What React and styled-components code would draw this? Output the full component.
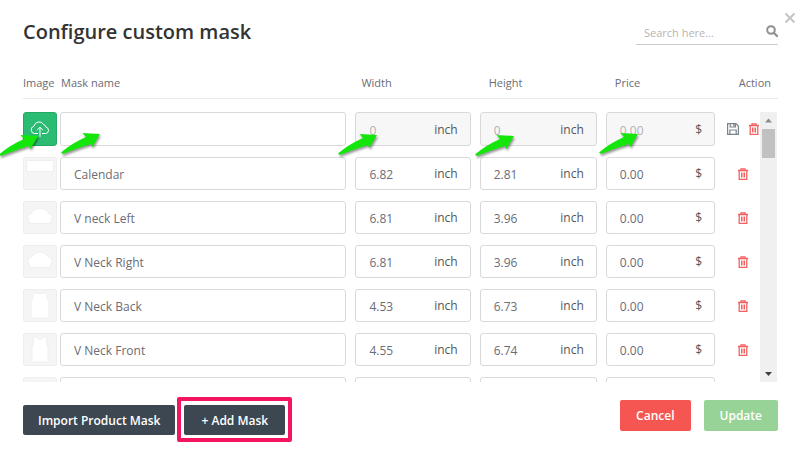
import React from "react";
import styled, { createGlobalStyle } from "styled-components";

const GlobalStyle = createGlobalStyle`
  *, *::before, *::after { box-sizing: border-box; }
  body {
    margin: 0;
    background: #fff;
    color: #6b6c76;
    font-family: "Open Sans", "Noto Sans", sans-serif;
    font-size: 12px;
    overflow: hidden;
  }
  button, input { font: inherit; }
`;

const Dialog = styled.main`
  position: relative;
  padding: 17px 22px 17px 23px;
`;

const CloseButton = styled.button`
  position: absolute;
  top: 12px;
  right: 4px;
  display: flex;
  padding: 0;
  border: 0;
  background: none;
  color: #c4c4c4;
`;

const Header = styled.header`
  display: flex;
  justify-content: space-between;
  align-items: flex-start;
  height: 56px;
`;

const Title = styled.h1`
  margin: 0;
  color: #333;
  font-size: 20px;
  font-weight: 600;
  line-height: 30px;
`;

const SearchBox = styled.label`
  display: flex;
  align-items: center;
  width: 142px;
  height: 28px;
  padding-left: 8px;
  border-bottom: 1px solid #ccc;
  color: #8f8f8f;
`;

const SearchInput = styled.input`
  flex: 1;
  min-width: 0;
  padding: 3px 0 0;
  border: 0;
  outline: 0;
  background: none;
  color: #555;
  font-size: 11px;
  &::placeholder { color: #b5b5b5; opacity: 1; }
`;

const TableFrame = styled.div`
  display: grid;
`;

const Table = styled.table`
  grid-area: 1 / 1;
  display: block;
`;

const Head = styled.thead`
  display: block;
  margin-bottom: 13px;
  border-bottom: 1px solid #e9e9e9;
`;

const Body = styled.tbody`
  display: grid;
  align-content: start;
  row-gap: 11px;
  height: 270px;
  margin-right: 17px;
  overflow: hidden;
`;

const columns = "37px minmax(0, 295fr) minmax(0, 124fr) minmax(0, 126fr) minmax(0, 109fr)";

const HeadRow = styled.tr`
  display: grid;
  grid-template-columns: ${columns} 63px;
  height: 25px;
`;

const HeadCell = styled.th`
  padding: 0 ${(p) => (p.$end ? 7 : 0)}px 0 ${(p) => p.$inset || 0}px;
  font-size: 11px;
  font-weight: 400;
  line-height: 20px;
  text-align: ${(p) => (p.$end ? "right" : "left")};
  white-space: nowrap;
`;

const Row = styled.tr`
  display: grid;
  grid-template-columns: ${columns} 46px;
  height: ${(p) => (p.$draft ? 34 : 33)}px;
`;

const Cell = styled.td`
  display: flex;
  padding: 0 ${(p) => p.$gap || 0}px 0 0;
`;

const Thumb = styled.div`
  width: 34px;
  border: 1px solid #eeeeee;
  border-radius: 2px;
  background: #f5f5f5;
  svg { display: block; }
`;

const UploadButton = styled.button`
  display: grid;
  place-items: center;
  width: 34px;
  padding: 0;
  border: 1px solid #25a866;
  border-radius: 3px;
  background: #2bbc73;
  color: #fff;
`;

const Field = styled.label`
  display: flex;
  align-items: center;
  width: 100%;
  padding: 0 12px 0 13px;
  border: 1px solid #d9d9d9;
  border-radius: 3px;
  background: ${(p) => (p.$muted ? "#f7f7f7" : "#fff")};
`;

const FieldInput = styled.input`
  flex: 1;
  min-width: 0;
  width: 0;
  padding: 2px 0 0;
  border: 0;
  outline: 0;
  background: none;
  color: #6b6c76;
  &::placeholder { color: #b2b2b2; opacity: 1; }
`;

const Unit = styled.span`
  color: #555;
`;

const Actions = styled.td`
  display: flex;
  justify-content: center;
  align-items: center;
  gap: 10px;
  padding: 0 0 0 9px;
`;

const IconButton = styled.button`
  display: flex;
  padding: 0;
  border: 0;
  background: none;
  color: ${(p) => (p.$danger ? "#f26161" : "#7b838a")};
`;

const ScrollTrack = styled.div`
  grid-area: 1 / 1;
  place-self: end;
  display: flex;
  flex-direction: column;
  align-items: center;
  width: 17px;
  height: 270px;
  margin-right: 1px;
  background: #f0f0f0;
`;

const ScrollThumb = styled.div`
  width: 13px;
  height: 29px;
  margin-bottom: auto;
  background: #c1c1c1;
`;

const Footer = styled.footer`
  display: flex;
  justify-content: space-between;
  align-items: flex-start;
  padding-top: 18px;
`;

const ButtonGroup = styled.div`
  display: flex;
  gap: ${(p) => p.$gap}px;
  padding-top: ${(p) => p.$drop || 0}px;
`;

const tones = { dark: "#3c4752", red: "#f65651", green: "#97d396" };

const Button = styled.button`
  height: ${(p) => (p.$tone === "dark" ? 30 : 31)}px;
  padding: 0 ${(p) => p.$pad || 16}px;
  border: 0;
  border-radius: 2px;
  background: ${(p) => tones[p.$tone]};
  color: #fff;
  font-weight: 600;
  white-space: nowrap;
`;

const Highlighted = styled.div`
  position: relative;
  display: flex;
  &::after {
    content: "";
    position: absolute;
    inset: -8px -7px -7px;
    border: 4px solid #f4145f;
    border-radius: 2px;
    pointer-events: none;
  }
`;

const Pointer = styled.svg`
  position: absolute;
  left: ${(p) => p.$x};
  top: ${(p) => p.$y}px;
  pointer-events: none;
  filter: drop-shadow(1px 2px 1px rgba(0, 0, 0, 0.4));
`;

const CloseIcon = () => (
  <svg width="12" height="12" viewBox="0 0 12 12" stroke="currentColor" strokeWidth="2">
    <path d="M1.5 1.5 10.5 10.5M10.5 1.5 1.5 10.5" />
  </svg>
);

const SearchIcon = () => (
  <svg width="12" height="12" viewBox="0 0 12 12" fill="none" stroke="currentColor" strokeWidth="2">
    <circle cx="5" cy="5" r="3.8" />
    <path d="M7.8 7.8 11 11" strokeLinecap="round" strokeWidth="2.2" />
  </svg>
);

const CloudUploadIcon = () => (
  <svg width="20" height="18" viewBox="0 0 20 18" fill="none" stroke="currentColor" strokeLinecap="round" strokeLinejoin="round">
    <path d="M7.5 13.5H4.8A3.7 3.7 0 0 1 4 6.2 5.2 5.2 0 0 1 13.6 4.5 3.5 3.5 0 0 1 16 7.2 3.2 3.2 0 0 1 15.7 13.5H12.5M10 16.5V7.3M7.2 10 10 7.2 12.8 10" />
  </svg>
);

const TrashIcon = () => (
  <svg width="10" height="12" viewBox="0 0 10 12" fill="none" stroke="currentColor">
    <path strokeWidth="1.3" d="M0 2.5H10M3 2.5V.8H7V2.5M1.2 2.5V11.3H8.8V2.5" />
    <path d="M3.5 4.5V9.5M5 4.5V9.5M6.5 4.5V9.5" />
  </svg>
);

const SaveIcon = () => (
  <svg width="12" height="12" viewBox="0 0 12 12" fill="none" stroke="currentColor" strokeWidth="1.2">
    <path d="M.6.6H9L11.4 3V11.4H.6ZM3.2.8V4H8.4V.8M2.8 11.2V7H9.2V11.2M6.8 1V3.2" />
  </svg>
);

const ScrollArrow = ({ down }) => (
  <svg width="17" height="17" viewBox="0 0 17 17">
    <path d={down ? "M5 7H12L8.5 11Z" : "M5 10.5H12L8.5 6.5Z"} fill={down ? "#404040" : "#8b8b8b"} />
  </svg>
);

const shapes = {
  banner: "M2.5 2.5H29.5V13.5H2.5Z",
  sleeve: "M3 13Q7 13 9 9Q16 3 23 9Q25 13 29 13L26 21.5H6Z",
  back: "M9 3H13Q16 4 19 3H23Q22 8 25 12V28H7V12Q10 8 9 3Z",
  front: "M9 3H13Q16 8 19 3H23Q21 9 24 13V28H8V13Q11 9 9 3Z",
};

const MaskShape = ({ kind }) => (
  <svg width="32" height="31" viewBox="0 0 32 31">
    <path d={shapes[kind]} fill="#fff" stroke="#efefef" />
  </svg>
);

const masks = [
  { name: "Calendar", width: "6.82", height: "2.81", price: "0.00", shape: "banner" },
  { name: "V neck Left", width: "6.81", height: "3.96", price: "0.00", shape: "sleeve" },
  { name: "V Neck Right", width: "6.81", height: "3.96", price: "0.00", shape: "sleeve" },
  { name: "V Neck Back", width: "4.53", height: "6.73", price: "0.00", shape: "back" },
  { name: "V Neck Front", width: "4.55", height: "6.74", price: "0.00", shape: "front" },
  { name: "", width: "", height: "", price: "", shape: "back" },
];

const pointers = [
  { x: "-2px", y: 133 },
  { x: "60px", y: 131 },
  { x: "calc(42.5% - 3px)", y: 132 },
  { x: "calc(59.5% - 2px)", y: 133 },
  { x: "calc(75% - 2px)", y: 131 },
];

const Measure = ({ label, unit, draft, ...input }) => (
  <Field $muted={draft}>
    <FieldInput aria-label={label} {...input} />
    {(draft || input.defaultValue) && <Unit>{unit}</Unit>}
  </Field>
);

const MaskRow = ({ mask }) => (
  <Row>
    <Cell><Thumb><MaskShape kind={mask.shape} /></Thumb></Cell>
    <Cell $gap={9}><Field><FieldInput aria-label="Mask name" defaultValue={mask.name} /></Field></Cell>
    <Cell $gap={9}><Measure label="Width" unit="inch" defaultValue={mask.width} /></Cell>
    <Cell $gap={9}><Measure label="Height" unit="inch" defaultValue={mask.height} /></Cell>
    <Cell><Measure label="Price" unit="$" defaultValue={mask.price} /></Cell>
    <Actions><IconButton $danger aria-label="Delete mask"><TrashIcon /></IconButton></Actions>
  </Row>
);

export default function App() {
  return (
    <Dialog>
      <GlobalStyle />
      <CloseButton aria-label="Close"><CloseIcon /></CloseButton>
      <Header>
        <Title>Configure custom mask</Title>
        <SearchBox>
          <SearchInput aria-label="Search" placeholder="Search here..." />
          <SearchIcon />
        </SearchBox>
      </Header>
      <TableFrame>
        <Table>
          <Head>
            <HeadRow>
              <HeadCell>Image</HeadCell>
              <HeadCell $inset={1}>Mask name</HeadCell>
              <HeadCell $inset={6}>Width</HeadCell>
              <HeadCell $inset={9}>Height</HeadCell>
              <HeadCell $inset={9}>Price</HeadCell>
              <HeadCell $end>Action</HeadCell>
            </HeadRow>
          </Head>
          <Body>
            <Row $draft>
              <Cell><UploadButton aria-label="Upload image"><CloudUploadIcon /></UploadButton></Cell>
              <Cell $gap={9}><Field><FieldInput aria-label="Mask name" /></Field></Cell>
              <Cell $gap={9}><Measure draft label="Width" unit="inch" placeholder="0" /></Cell>
              <Cell $gap={9}><Measure draft label="Height" unit="inch" placeholder="0" /></Cell>
              <Cell><Measure draft label="Price" unit="$" placeholder="0.00" /></Cell>
              <Actions>
                <IconButton aria-label="Save mask"><SaveIcon /></IconButton>
                <IconButton $danger aria-label="Delete mask"><TrashIcon /></IconButton>
              </Actions>
            </Row>
            {masks.map((mask, i) => <MaskRow key={i} mask={mask} />)}
          </Body>
        </Table>
        <ScrollTrack>
          <ScrollArrow />
          <ScrollThumb />
          <ScrollArrow down />
        </ScrollTrack>
      </TableFrame>
      <Footer>
        <ButtonGroup $gap={9} $drop={5}>
          <Button $tone="dark" $pad={15}>Import Product Mask</Button>
          <Highlighted><Button $tone="dark" $pad={17}>+ Add Mask</Button></Highlighted>
        </ButtonGroup>
        <ButtonGroup $gap={13}>
          <Button $tone="red">Cancel</Button>
          <Button $tone="green">Update</Button>
        </ButtonGroup>
      </Footer>
      {pointers.map((p) => (
        <Pointer key={p.x} $x={p.x} $y={p.y} width="42" height="26" viewBox="0 0 42 26">
          <path d="M1 21.5Q12 12 26 6L22.5 2 40 3 32.5 16 31 13Q15 18 3 23Z" fill="#14e60b" />
        </Pointer>
      ))}
    </Dialog>
  );
}
